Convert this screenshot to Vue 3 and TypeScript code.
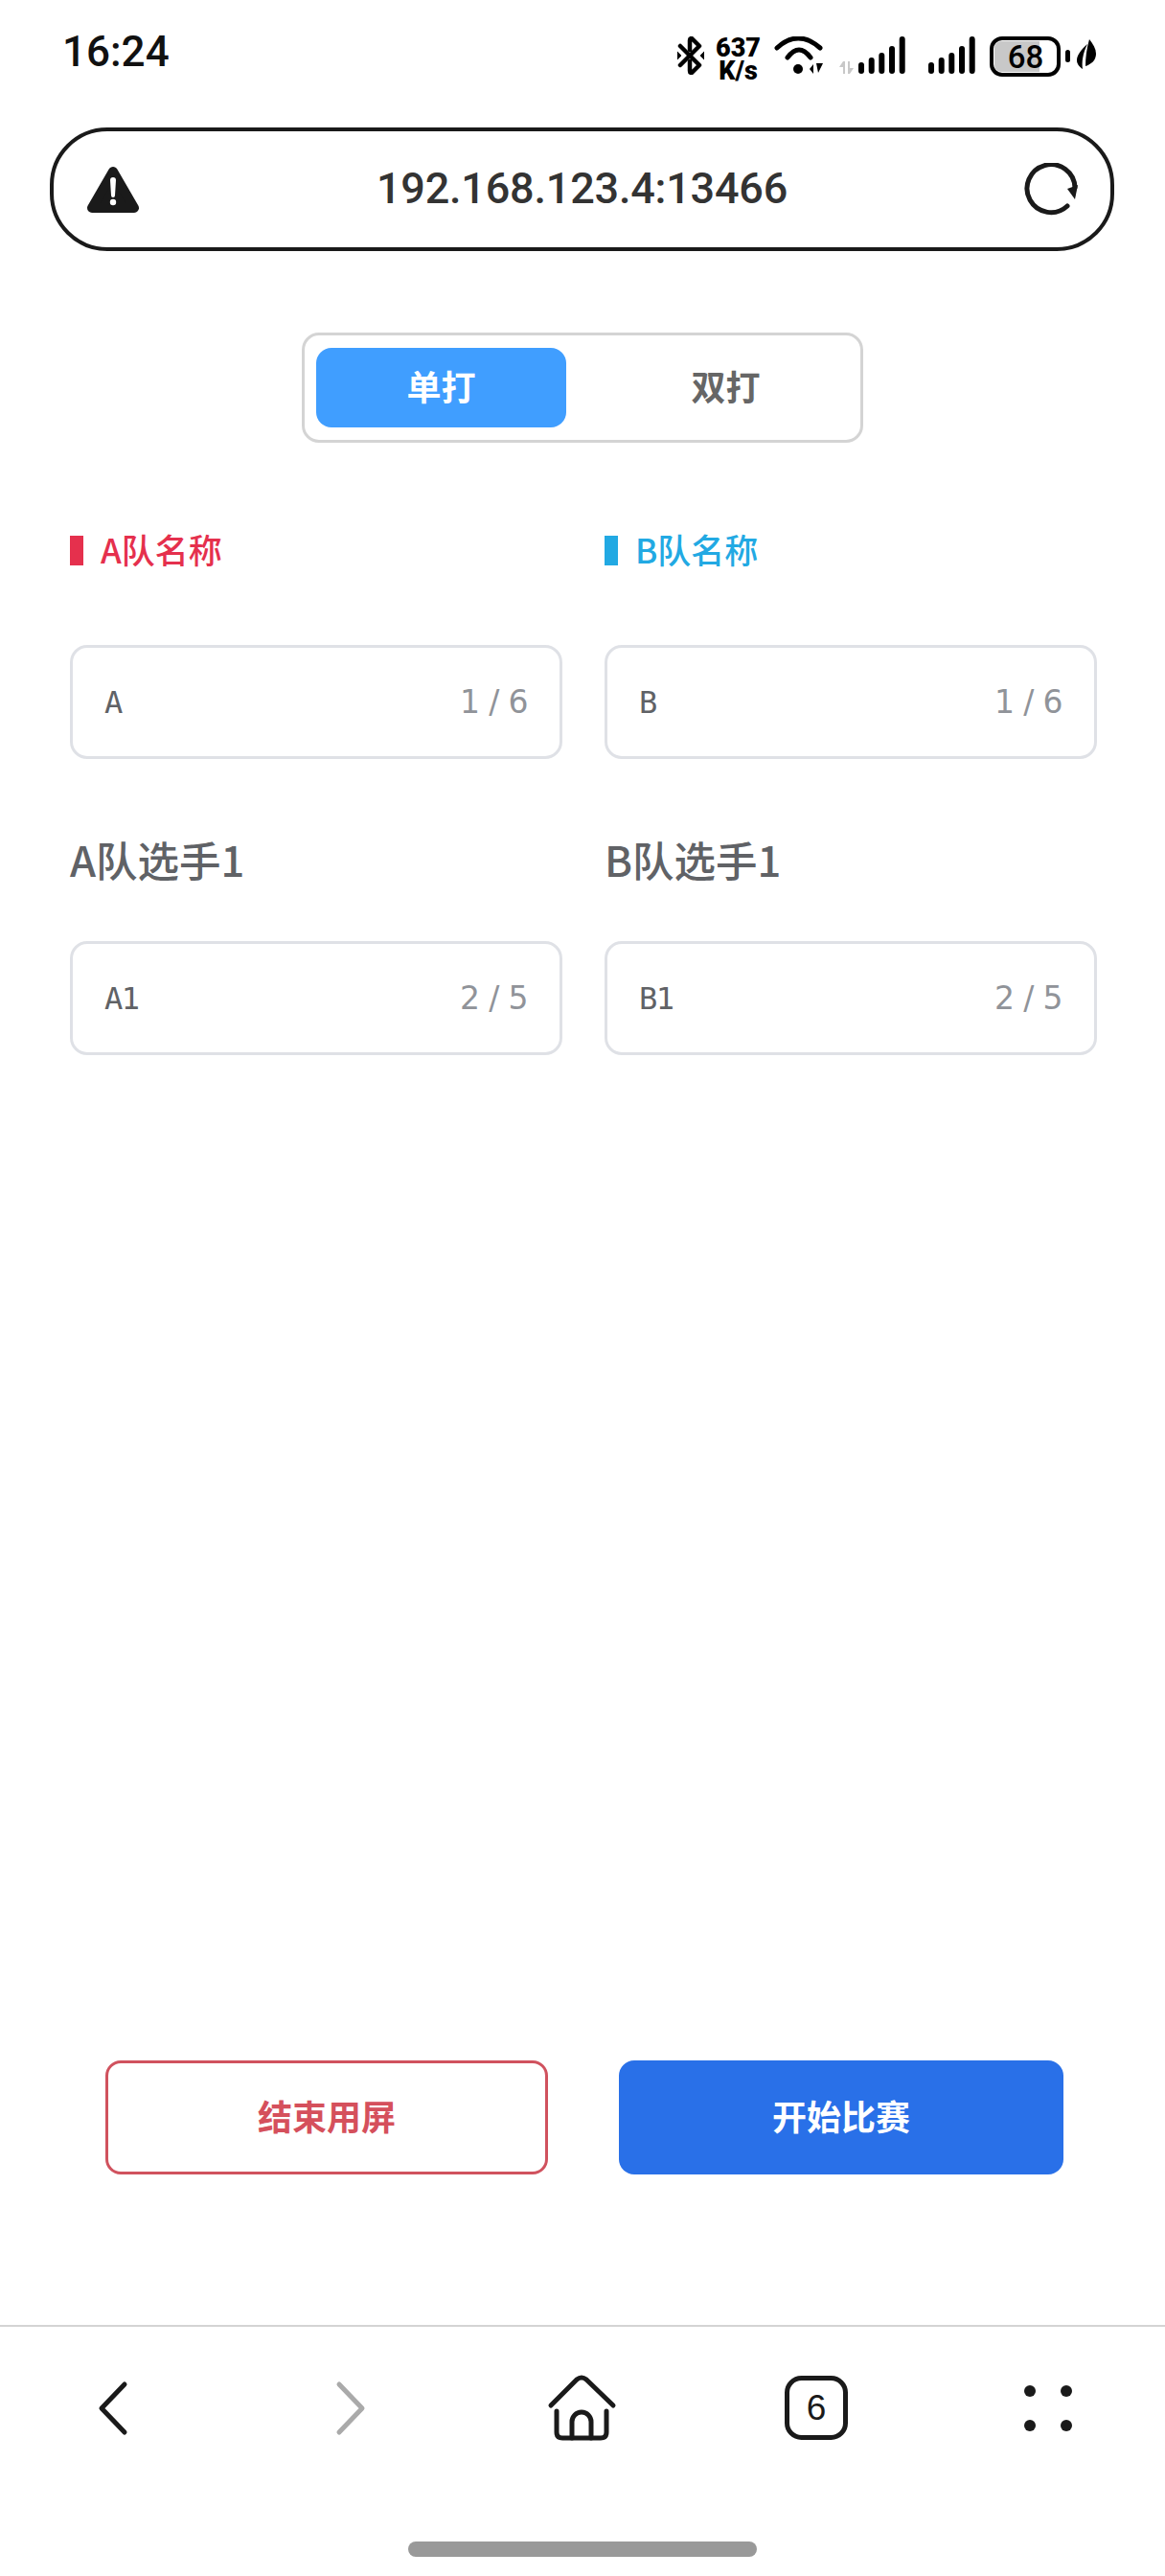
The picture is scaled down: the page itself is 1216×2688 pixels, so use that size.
<script setup lang="ts">
import { ref } from 'vue'

interface TeamField {
  label: string
  value: string
  count: string
  accent?: 'a' | 'b'
}

const mode = ref<'single' | 'double'>('single')

const fields: TeamField[] = [
  { label: 'A队名称', value: 'A', count: '1 / 6', accent: 'a' },
  { label: 'B队名称', value: 'B', count: '1 / 6', accent: 'b' },
  { label: 'A队选手1', value: 'A1', count: '2 / 5' },
  { label: 'B队选手1', value: 'B1', count: '2 / 5' },
]

const signalBars = [
  { x: 0, h: 12 },
  { x: 10.7, h: 17 },
  { x: 21.3, h: 22 },
  { x: 32, h: 29 },
  { x: 42.7, h: 39 },
]
</script>

<template>
  <div class="page">
    <!-- 状态栏 -->
    <header class="status-bar">
      <span class="time">16:24</span>
      <div class="status-icons">
        <svg class="bt" width="28" height="40" viewBox="0 0 28 40" fill="none" stroke="#000" stroke-width="4.5" stroke-linecap="round" stroke-linejoin="round">
          <path d="M3 10 L23 30 L15 38 Q13 38 13 36 V26" />
          <path d="M3 30 L23 10 L15 2 Q13 2 13 4 V14" />
          <path d="M0 16 L4 20 L0 24 Z M28 16 L24 20 L28 24 Z" fill="#000" stroke-width="1" />
        </svg>
        <div class="speed">
          <span>637</span>
          <span>K/s</span>
        </div>
        <svg class="wifi" width="51" height="39" viewBox="0 0 51 39" fill="none" stroke="#000" stroke-width="5" stroke-linecap="round">
          <path d="M3 12 Q25 -8 48 12" />
          <path d="M14 22 Q26 6 38 22" />
          <circle cx="25" cy="34" r="5" fill="#000" stroke="none" />
          <path d="M37 34 L41 29 V39 Z M44 28 H51 L46 38 Z" fill="#000" stroke="none" />
        </svg>
        <svg class="signal-first" width="69" height="39" viewBox="0 0 69 39">
          <path d="M0 32 L4 26 L6 26 V39 H4 V32 Z M9 26 H11 V33 L15 33 L11 39 H9 Z" fill="#c8c8c8" />
          <rect v-for="bar in signalBars" :key="bar.x" :x="bar.x + 20" :y="39 - bar.h" width="6" :height="bar.h" rx="3" fill="#000" />
        </svg>
        <svg class="signal-second" width="49" height="39" viewBox="0 0 49 39">
          <rect v-for="bar in signalBars" :key="bar.x" :x="bar.x" :y="39 - bar.h" width="6" :height="bar.h" rx="3" fill="#000" />
        </svg>
        <svg class="battery" width="84" height="42" viewBox="0 0 84 42">
          <rect x="2" y="2" width="70" height="38" rx="11" fill="#fff" stroke="#000" stroke-width="4" />
          <path d="M13 5 H52 V37 H13 Q5 37 5 29 V13 Q5 5 13 5 Z" fill="#c8c8c8" />
          <text x="37.5" y="32.5" text-anchor="middle" class="battery-text">68</text>
          <rect x="79" y="14" width="5" height="13" rx="2.5" fill="#000" />
        </svg>
        <svg class="leaf" width="20" height="31" viewBox="0 0 20 31" fill="#000">
          <path d="M13 0 C17 5 20 10 20 15 C20 22 15 26 9 28 C9 20 10 10 13 0 Z" />
          <path d="M11 5 C4 11 0 17 0 22 C0 26 3 29 6 31 C5 24 6 15 11 5 Z" />
        </svg>
      </div>
    </header>

    <!-- 地址栏 -->
    <div class="address-bar">
      <svg width="56" height="50" viewBox="0 0 56 50">
        <path d="M28 6 L50 44 H6 Z" fill="#1a1a1a" stroke="#1a1a1a" stroke-width="10" stroke-linejoin="round" />
        <path d="M25 15 a3 3 0 0 1 6 0 L30 31 a2 2 0 0 1 -4 0 Z" fill="#fff" />
        <circle cx="28" cy="38" r="3.2" fill="#fff" />
      </svg>
      <span class="url">192.168.123.4:13466</span>
      <svg width="56" height="56" viewBox="0 0 56 56" fill="none" stroke="#1a1a1a" stroke-width="5" stroke-linecap="round">
        <path d="M45 45 A25 25 0 1 1 53 26" />
        <path d="M45 27 L56 23 L53 38 Z" fill="#1a1a1a" stroke="none" />
      </svg>
    </div>

    <main class="content">
      <!-- 单打/双打切换 -->
      <div class="mode-switch">
        <button class="mode-item" :class="{ active: mode === 'single' }" @click="mode = 'single'">单打</button>
        <button class="mode-item" :class="{ active: mode === 'double' }" @click="mode = 'double'">双打</button>
      </div>

      <div class="form-grid">
        <div v-for="field in fields" :key="field.label" class="field">
          <div v-if="field.accent" class="team-title" :class="field.accent">
            <i class="team-mark"></i>{{ field.label }}
          </div>
          <div v-else class="player-title">{{ field.label }}</div>
          <div class="input-box">
            <span class="input-value">{{ field.value }}</span>
            <span class="input-count">{{ field.count }}</span>
          </div>
        </div>
      </div>

      <div class="actions">
        <button class="btn btn-end">结束用屏</button>
        <button class="btn btn-start">开始比赛</button>
      </div>
    </main>

    <!-- 底部工具栏 -->
    <footer class="toolbar">
      <nav class="toolbar-nav">
        <svg width="80" height="80" viewBox="0 0 80 80" fill="none" stroke="#1a1a1a" stroke-width="5" stroke-linecap="round" stroke-linejoin="round">
          <path d="M52 15 L28 40 L52 65" />
        </svg>
        <svg width="80" height="80" viewBox="0 0 80 80" fill="none" stroke="#aaa" stroke-width="5" stroke-linecap="round" stroke-linejoin="round">
          <path d="M32 15 L56 40 L32 65" />
        </svg>
        <svg width="80" height="80" viewBox="0 0 80 80" fill="none" stroke="#1a1a1a" stroke-width="5" stroke-linecap="round" stroke-linejoin="round">
          <path d="M9 37 L36 10 Q41 6 46 10 L74 37" />
          <path d="M15 43 V65 Q15 71 21 71 H61 Q67 71 67 65 V43" />
          <path d="M31 71 V54 A10 10 0 0 1 51 54 V71" />
        </svg>
        <svg width="80" height="80" viewBox="0 0 80 80">
          <rect x="11.5" y="8.5" width="61" height="62" rx="15" fill="none" stroke="#1a1a1a" stroke-width="5" />
          <text x="42" y="52" text-anchor="middle" class="tab-count">6</text>
        </svg>
        <svg width="80" height="80" viewBox="0 0 80 80" fill="#1a1a1a">
          <circle cx="21" cy="22" r="6" />
          <circle cx="59" cy="22" r="6" />
          <circle cx="21" cy="58" r="6" />
          <circle cx="59" cy="58" r="6" />
        </svg>
      </nav>
      <div class="home-indicator"></div>
    </footer>
  </div>
</template>

<style scoped>
.page {
  width: 1216px;
  height: 2688px;
  display: flex;
  flex-direction: column;
  background: #fff;
  font-family: "Noto Sans CJK SC", "Noto Sans", sans-serif;
  overflow: hidden;
}

.status-bar {
  height: 133px;
  flex-shrink: 0;
  box-sizing: border-box;
  padding: 29px 72px 0 65px;
  display: flex;
  justify-content: space-between;
  align-items: flex-start;
}

.time {
  font-family: Roboto, sans-serif;
  font-size: 44px;
  font-weight: 500;
  line-height: 50px;
  color: #111;
}

.status-icons {
  display: flex;
  align-items: flex-start;
  margin-top: 9px;
}

.speed {
  margin-left: 12px;
  display: flex;
  flex-direction: column;
  align-items: center;
  width: 47px;
  font-family: Roboto, sans-serif;
  font-weight: 900;
  font-size: 27px;
  line-height: 24px;
  color: #000;
}

.wifi {
  margin-left: 14px;
}

.signal-first {
  margin-left: 17px;
}

.signal-second {
  margin-left: 24px;
}

.battery {
  margin-left: 15px;
}

.battery-text {
  font-family: Roboto, sans-serif;
  font-size: 33px;
  font-weight: 500;
  fill: #000;
}

.leaf {
  margin-left: 7px;
  margin-top: 3px;
}

.address-bar {
  height: 129px;
  flex-shrink: 0;
  box-sizing: border-box;
  margin: 0 53px 0 52px;
  padding: 0 34px;
  border: 4.5px solid #1a1a1a;
  border-radius: 60px;
  display: flex;
  align-items: center;
  justify-content: space-between;
}

.url {
  padding-bottom: 3px;
  font-family: Roboto, sans-serif;
  font-size: 45px;
  font-weight: 500;
  letter-spacing: -0.2px;
  color: #333;
}

.content {
  flex: 1;
  display: flex;
  flex-direction: column;
}

.mode-switch {
  width: 586px;
  height: 115px;
  box-sizing: border-box;
  margin: 85px auto 0;
  padding: 13px 10px 13px 12px;
  border: 3px solid #d4d4d4;
  border-radius: 18px;
  display: flex;
  justify-content: space-between;
}

.mode-item {
  width: 261px;
  border: none;
  border-radius: 16px;
  background: transparent;
  font-family: inherit;
  font-size: 36px;
  font-weight: 700;
  color: #666;
  padding: 0 0 5px;
}

.mode-item.active {
  background: #409eff;
  color: #fff;
}

.form-grid {
  margin-top: 95px;
  padding-left: 73px;
  display: grid;
  grid-template-columns: 514px 514px;
  column-gap: 44px;
  row-gap: 84px;
}

.field {
  display: flex;
  flex-direction: column;
}

.team-title {
  height: 36px;
  margin-bottom: 80px;
  display: flex;
  align-items: flex-start;
  font-size: 35px;
  font-weight: 500;
  line-height: 31px;
}

.team-title.a {
  color: #e5304d;
}

.team-title.b {
  color: #22a9e3;
}

.team-mark {
  width: 14px;
  height: 31px;
  margin: 2px 18px 0 0;
  background: currentColor;
}

.player-title {
  height: 48px;
  margin-bottom: 58px;
  font-size: 43.5px;
  font-weight: 500;
  line-height: 42px;
  color: #606266;
}

.input-box {
  height: 119px;
  box-sizing: border-box;
  padding: 0 33px 0 33px;
  border: 3px solid #dfe1e6;
  border-radius: 18px;
  display: flex;
  align-items: center;
  justify-content: space-between;
}

.input-value {
  font-family: "DejaVu Sans Mono", monospace;
  font-size: 32px;
  letter-spacing: -1.5px;
  color: #606266;
}

.input-count {
  font-family: "DejaVu Sans", sans-serif;
  font-size: 33px;
  letter-spacing: -0.6px;
  color: #909399;
}

.actions {
  margin-top: auto;
  margin-bottom: 157px;
  padding-left: 110px;
  display: grid;
  grid-template-columns: 462px 464px;
  column-gap: 74px;
}

.btn {
  height: 119px;
  box-sizing: border-box;
  border-radius: 16px;
  font-family: inherit;
  font-size: 36px;
  font-weight: 700;
  padding: 0 0 5px;
}

.btn-end {
  border: 3px solid #d0525e;
  background: #fff;
  color: #d5505c;
}

.btn-start {
  border: none;
  background: #2970e8;
  color: #fff;
}

.toolbar {
  flex-shrink: 0;
  height: 262px;
  box-sizing: border-box;
  padding-top: 45px;
  border-top: 2px solid #d4d4d4;
  display: flex;
  flex-direction: column;
  align-items: center;
}

.toolbar-nav {
  width: 100%;
  box-sizing: border-box;
  padding: 0 82px 0 78px;
  display: flex;
  justify-content: space-between;
}

.tab-count {
  font-family: "Liberation Sans", sans-serif;
  font-size: 37px;
  fill: #1a1a1a;
}

.home-indicator {
  width: 364px;
  height: 16px;
  margin-top: 99px;
  border-radius: 8px;
  background: #999;
}
</style>

<style>
html,
body {
  margin: 0;
  background: #fff;
}
</style>
